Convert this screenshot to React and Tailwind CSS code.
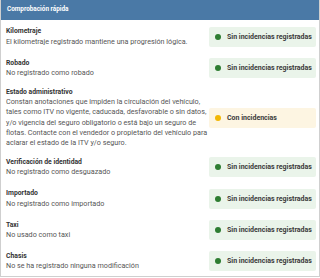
import React from "react";

const rows = [
  { t: "Kilometraje", d: "El kilometraje registrado mantiene una progresión lógica.", ok: true },
  { t: "Robado", d: "No registrado como robado", ok: true },
  {
    t: "Estado administrativo",
    d: "Constan anotaciones que impiden la circulación del vehículo, tales como ITV no vigente, caducada, desfavorable o sin datos, y/o vigencia del seguro obligatorio o está bajo un seguro de flotas. Contacte con el vendedor o propietario del vehículo para aclarar el estado de la ITV y/o seguro.",
    ok: false,
  },
  { t: "Verificación de identidad", d: "No registrado como desguazado", ok: true },
  { t: "Importado", d: "No registrado como importado", ok: true },
  { t: "Taxi", d: "No usado como taxi", ok: true },
  { t: "Chasis", d: "No se ha registrado ninguna modificación", ok: true },
];

function Badge({ ok }) {
  return (
    <div
      className={
        "flex items-center h-[20px] w-[107px] rounded-[2px] pl-[6px] gap-[6px] " +
        (ok ? "bg-[#eaf4ea]" : "bg-[#fdf5e2]")
      }
    >
      <span
        className={
          "block w-[6px] h-[6px] rounded-full " + (ok ? "bg-[#2e7d32]" : "bg-[#f2b705]")
        }
      />
      <span className="text-[7px] font-bold text-[#3a3a3a] leading-[10px]">
        {ok ? "Sin incidencias registradas" : "Con incidencias"}
      </span>
    </div>
  );
}

export default function App() {
  return (
    <div
      className="w-[320px] h-[278px] bg-white"
      style={{ fontFamily: "Roboto, 'Liberation Sans', sans-serif" }}
    >
      <div className="border border-t-0 border-[#cfcfcf] h-[277px] overflow-hidden">
        <div className="h-[20px] bg-[#4a79a6] flex items-center pl-[6px]">
          <span className="text-white font-bold text-[6.4px]">Comprobación rápida</span>
        </div>
        <div className="pt-[1px]">
          {rows.map((r, i) => (
            <div key={i} className="flex items-center py-[3.6px] pl-[5px] pr-[2px]">
              <div className="w-[203px] leading-[10.2px]">
                <div className="font-bold text-[#333] text-[6.8px]">{r.t}</div>
                <div className="text-[#555] text-[7.2px]">{r.d}</div>
              </div>
              <div className="py-[2px]">
                <Badge ok={r.ok} />
              </div>
            </div>
          ))}
        </div>
      </div>
    </div>
  );
}
